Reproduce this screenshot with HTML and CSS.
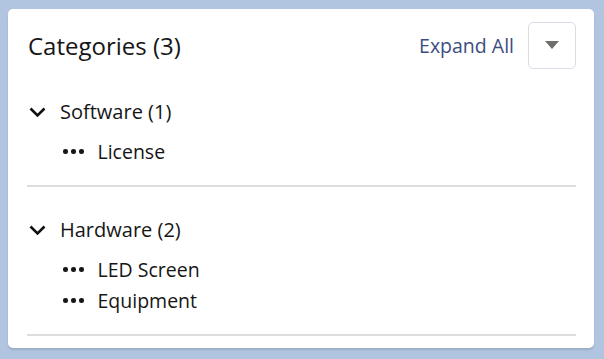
FILE: index.html
```html
<!DOCTYPE html>
<html lang="en">
<head>
  <meta charset="UTF-8" />
  <title>Categories</title>
  <link rel="stylesheet" href="styles.css">
</head>
<body>
  <div class="card">
    <div class="card-header">
      <h2 class="title">Categories (3)</h2>
      <a class="expand" href="#">Expand All</a>
      <button class="menu-btn" title="More">
        <svg width="14" height="9" viewBox="0 0 14 9"><path d="M0 0 H14 L7 8 Z" fill="#706e6b"/></svg>
      </button>
    </div>

    <div class="section">
      <div class="cat-row">
        <svg class="chevron" width="17" height="11" viewBox="0 0 17 11"><path d="M1.5 1.5 L8.5 8.5 L15.5 1.5" fill="none" stroke="#111" stroke-width="2.6"/></svg>
        <span>Software (1)</span>
      </div>
      <ul class="items">
        <li><span class="dots"><i></i><i></i><i></i></span>License</li>
      </ul>
    </div>

    <div class="section">
      <div class="cat-row">
        <svg class="chevron" width="17" height="11" viewBox="0 0 17 11"><path d="M1.5 1.5 L8.5 8.5 L15.5 1.5" fill="none" stroke="#111" stroke-width="2.6"/></svg>
        <span>Hardware (2)</span>
      </div>
      <ul class="items">
        <li><span class="dots"><i></i><i></i><i></i></span>LED Screen</li>
        <li><span class="dots"><i></i><i></i><i></i></span>Equipment</li>
      </ul>
    </div>
  </div>
</body>
</html>
```

FILE: styles.css
```css
body {
  margin: 0;
  padding: 9px 10px 10px 8px;
  background-color: #b1c5e0;
  font-family: 'Open Sans', sans-serif;
  color: #161616;
}

.card {
  background-color: #fff;
  border-radius: 5px;
  box-shadow: 0 2px 2px rgba(0, 0, 0, 0.12);
  padding: 13px 18px 12px 19px;
}

.card-header {
  display: flex;
  align-items: center;
  height: 47px;
}

.title {
  flex: 1;
  margin: 0 0 0 1px;
  font-size: 24px;
  font-weight: 400;
  line-height: 1;
}

.expand {
  color: #3d4c7f;
  text-decoration: none;
  font-size: 19.5px;
  margin-right: 14px;
}

.menu-btn {
  width: 48px;
  height: 47px;
  border: 1px solid #d8dde6;
  border-radius: 5px;
  background: #fff;
  display: flex;
  align-items: center;
  justify-content: center;
  padding: 0;
}

.section {
  padding: 26px 0 18px;
  border-bottom: 2px solid #dddddd;
}

.cat-row {
  display: flex;
  align-items: center;
  height: 32px;
  font-size: 20px;
}

.chevron {
  margin: 2px 14px 0 2px;
}

.items {
  list-style: none;
  margin: 9px 0 0;
  padding: 0 0 0 36px;
}

.items li {
  display: flex;
  align-items: center;
  height: 31px;
  font-size: 19.5px;
}

.dots {
  display: flex;
  gap: 3.5px;
  margin-right: 14px;
}

.dots i {
  width: 4.5px;
  height: 4.5px;
  border-radius: 50%;
  background-color: #161616;
}
```
